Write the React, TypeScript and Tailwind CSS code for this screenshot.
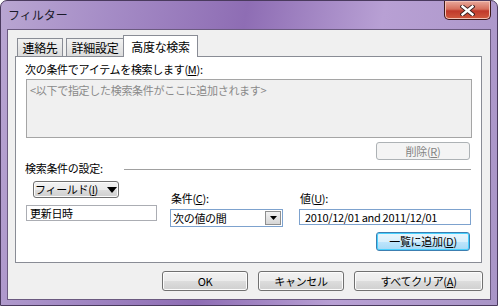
import React from "react";

const font = { fontFamily: '"Noto Sans CJK JP", "Liberation Sans", sans-serif' };

function WinButton({
  children,
  className = "",
  disabled = false,
  focused = false,
}: {
  children: React.ReactNode;
  className?: string;
  disabled?: boolean;
  focused?: boolean;
}) {
  if (disabled) {
    return (
      <div
        className={`flex items-center justify-center whitespace-nowrap rounded-[3px] border border-[#adb2b5] bg-[#f4f4f4] text-[11px] leading-none text-[#838383] ${className}`}
      >
        {children}
      </div>
    );
  }
  return (
    <div
      className={`flex items-center justify-center whitespace-nowrap rounded-[3px] border text-[11px] leading-none text-black ${
        focused
          ? "border-[#3c7fb1] bg-[linear-gradient(#eaf6fd_0%,#d9f0fc_50%,#bee6fd_51%,#a7d9f5_100%)] shadow-[inset_0_0_0_1px_#48d1ff]"
          : "border-[#707070] bg-[linear-gradient(#f2f2f2_0%,#ebebeb_50%,#dddddd_51%,#cfcfcf_100%)] shadow-[inset_0_0_0_1px_#fcfcfc]"
      } ${className}`}
    >
      {children}
    </div>
  );
}

function TextBox({ value, className = "", blue = false }: { value: string; className?: string; blue?: boolean }) {
  return (
    <div
      className={`flex h-[16px] items-center whitespace-nowrap border bg-white pl-[3px] text-[11px] leading-none text-black ${
        blue ? "border-[#7da2ce]" : "border-[#abadb3]"
      } ${className}`}
    >
      {value}
    </div>
  );
}

export default function App() {
  return (
    <div
      className="relative h-[306px] w-[498px] overflow-hidden rounded-t-[7px] border border-[#4a3a5e] bg-[linear-gradient(100deg,#b9a6d2_0%,#a58cc6_20%,#8e6db4_45%,#b8a0d4_70%,#a995c7_100%)] tracking-[-0.3px]"
      style={font}
    >
      {/* ── Title bar ── */}
      <div className="flex h-[28px] items-start justify-between">
        <span className="ml-[7px] mt-[6px] text-[12px] leading-[16px] tracking-normal text-[#1a1a2a]">フィルター</span>
        <div className="mr-[6px] flex h-[19px] w-[47px] items-center justify-center rounded-b-[5px] border border-t-0 border-[#3d1a1a] bg-[linear-gradient(#e9a99c_0%,#d6705d_45%,#c0392b_55%,#d05a3f_100%)] shadow-[inset_0_0_0_1px_#f3c1b5]">
          <svg width="15" height="11" viewBox="0 0 15 11">
            <path d="M2.5 1.5 L12.5 9.5 M12.5 1.5 L2.5 9.5" stroke="#3a1f1f" strokeWidth="4.2" strokeLinecap="square" />
            <path d="M2.5 1.5 L12.5 9.5 M12.5 1.5 L2.5 9.5" stroke="#ffffff" strokeWidth="2.4" strokeLinecap="square" />
          </svg>
        </div>
      </div>

      {/* ── Client area ── */}
      <div className="ml-[6px] h-[271px] w-[484px] border border-[#6b5a80] bg-[#f0f0f0] pt-[5px]">
        {/* Tabs */}
        <div className="relative z-10 ml-[9px] flex h-[21px] items-end">
          <div className="mr-[3px] flex h-[18px] w-[46px] items-center justify-center border border-b-0 border-[#898c95] bg-[linear-gradient(#f2f2f2,#dcdcdc)] text-[12px] leading-none">
            連絡先
          </div>
          <div className="flex h-[18px] w-[58px] items-center justify-center border border-b-0 border-[#898c95] bg-[linear-gradient(#f2f2f2,#dcdcdc)] text-[12px] leading-none">
            詳細設定
          </div>
          <div className="-mb-px -ml-px flex h-[22px] w-[75px] items-center justify-center border border-b-0 border-[#898c95] bg-white text-[12px] leading-none">
            高度な検索
          </div>
        </div>

        {/* Panel */}
        <div className="ml-[7px] flex h-[207px] w-[467px] flex-col border border-[#898c95] bg-white pl-[9px] pr-[8px]">
          <div className="mt-[5px] whitespace-nowrap text-[11px] leading-[14px]">
            次の条件でアイテムを検索します(<span className="underline">M</span>):
          </div>
          <div className="mt-[3px] ml-px h-[59px] w-[446px] whitespace-nowrap border border-[#a5a5a5] bg-[#f0f0f0] pl-[3px] pt-[3px] text-[11px] leading-[15px] text-[#8a8a8a]">
            &lt;以下で指定した検索条件がここに追加されます&gt;
          </div>
          <div className="mt-[4px] flex justify-end pr-[3px]">
            <WinButton disabled className="h-[18px] w-[94px]">
              削除(<span className="underline">R</span>)
            </WinButton>
          </div>

          {/* Group label */}
          <div className="mt-px flex items-center">
            <span className="whitespace-nowrap text-[11px] leading-[14px]">検索条件の設定:</span>
            <div className="ml-[21px] mr-[2px] mt-[2px] h-px flex-1 bg-[#a0a0a0]" />
          </div>

          <div className="mt-[2px] flex">
            {/* Field column */}
            <div className="flex w-[132px] flex-col">
              <WinButton className="ml-[8px] mt-[4px] h-[17px] w-[86px] gap-[9px]">
                <span>
                  フィールド(<span className="underline">I</span>)
                </span>
                <svg width="10" height="6" viewBox="0 0 10 6">
                  <path d="M0 0 H10 L5 6 Z" fill="#000" />
                </svg>
              </WinButton>
              <TextBox value="更新日時" className="mt-[7px] ml-px w-[131px]" />
            </div>

            {/* Condition column */}
            <div className="ml-[13px] flex w-[113px] flex-col">
              <div className="mt-[14px] ml-px whitespace-nowrap text-[11px] leading-[14px]">
                条件(<span className="underline">C</span>):
              </div>
              <div className="mt-[4px] flex h-[18px] items-center justify-between whitespace-nowrap border border-[#7da2ce] bg-white pl-[2px] pr-[1px] text-[11px] leading-none">
                <span>次の値の間</span>
                <div className="flex h-[14px] w-[16px] items-center justify-center border border-[#8e8f8f] bg-[linear-gradient(#f2f2f2,#d6d6d6)]">
                  <svg width="7" height="4" viewBox="0 0 7 4">
                    <path d="M0 0 H7 L3.5 4 Z" fill="#000" />
                  </svg>
                </div>
              </div>
            </div>

            {/* Value column */}
            <div className="ml-[16px] flex w-[172px] flex-col">
              <div className="mt-[14px] ml-px whitespace-nowrap text-[11px] leading-[14px]">
                値(<span className="underline">U</span>):
              </div>
              <TextBox
                value="2010/12/01 and 2011/12/01"
                blue
                className="mt-[4px] w-[172px] pl-[5px]"
              />
              <div className="mt-[7px] flex justify-end pr-px">
                <WinButton focused className="h-[19px] w-[94px]">
                  一覧に追加(<span className="underline">D</span>)
                </WinButton>
              </div>
            </div>
          </div>
        </div>

        {/* Bottom buttons */}
        <div className="mt-[8px] flex justify-end gap-[10px] pr-[7px]">
          <WinButton className="h-[20px] w-[86px]">OK</WinButton>
          <WinButton className="h-[20px] w-[86px]">キャンセル</WinButton>
          <WinButton className="h-[20px] w-[129px]">
            すべてクリア(<span className="underline">A</span>)
          </WinButton>
        </div>
      </div>
    </div>
  );
}
